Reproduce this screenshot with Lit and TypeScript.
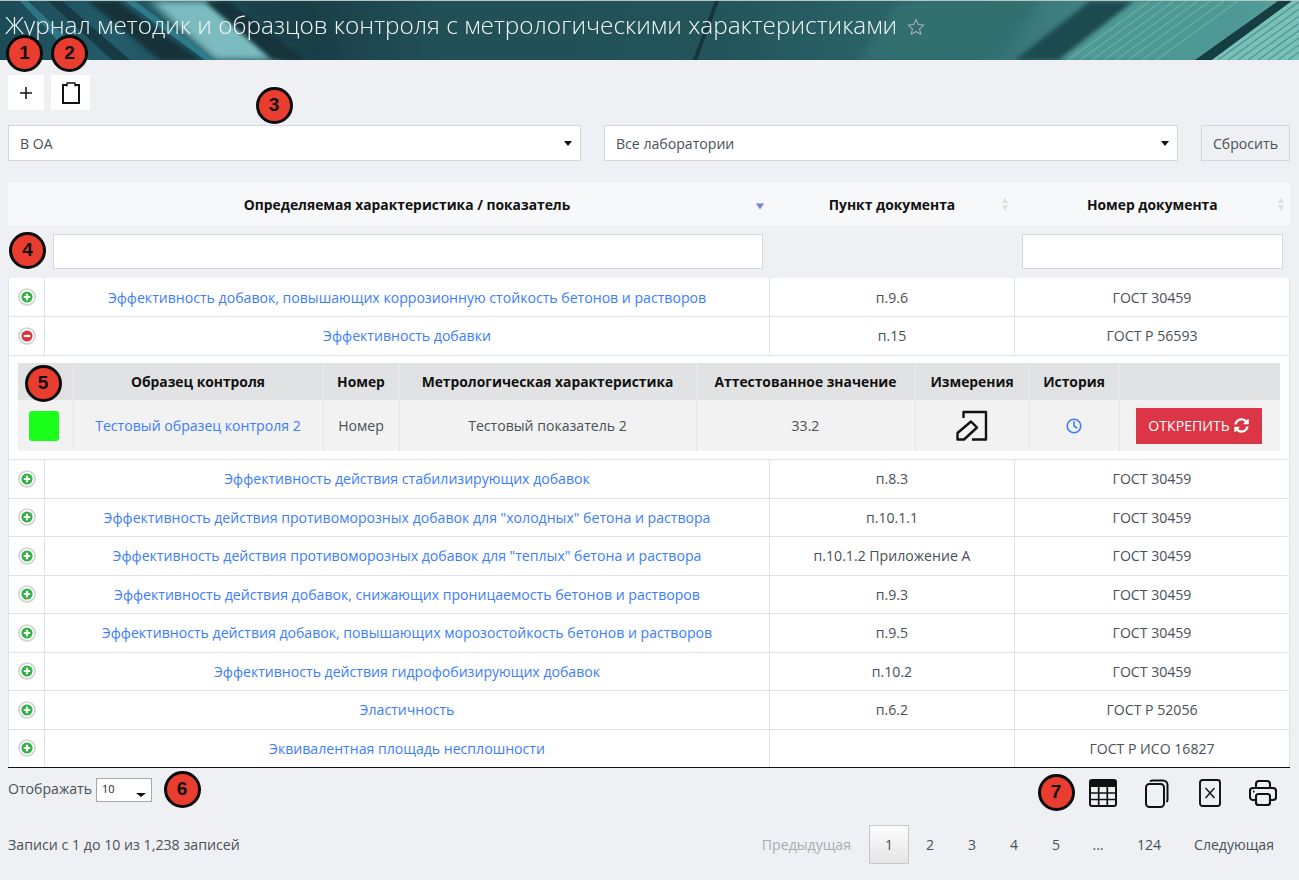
import { LitElement, css, html, svg } from "lit";
import { customElement, state } from "lit/decorators.js";

type Row = { name: string; clause: string; doc: string; open?: boolean };

const rows: Row[] = [
  { name: "Эффективность добавок, повышающих коррозионную стойкость бетонов и растворов", clause: "п.9.6", doc: "ГОСТ 30459" },
  { name: "Эффективность добавки", clause: "п.15", doc: "ГОСТ Р 56593", open: true },
  { name: "Эффективность действия стабилизирующих добавок", clause: "п.8.3", doc: "ГОСТ 30459" },
  { name: 'Эффективность действия противоморозных добавок для "холодных" бетона и раствора', clause: "п.10.1.1", doc: "ГОСТ 30459" },
  { name: 'Эффективность действия противоморозных добавок для "теплых" бетона и раствора', clause: "п.10.1.2 Приложение А", doc: "ГОСТ 30459" },
  { name: "Эффективность действия добавок, снижающих проницаемость бетонов и растворов", clause: "п.9.3", doc: "ГОСТ 30459" },
  { name: "Эффективность действия добавок, повышающих морозостойкость бетонов и растворов", clause: "п.9.5", doc: "ГОСТ 30459" },
  { name: "Эффективность действия гидрофобизирующих добавок", clause: "п.10.2", doc: "ГОСТ 30459" },
  { name: "Эластичность", clause: "п.6.2", doc: "ГОСТ Р 52056" },
  { name: "Эквивалентная площадь несплошности", clause: "", doc: "ГОСТ Р ИСО 16827" },
];

// numbered annotation marks lying over the page
const marks = [
  { n: 1, x: 24.5, y: 53 },
  { n: 2, x: 69.5, y: 53 },
  { n: 3, x: 274, y: 105 },
  { n: 4, x: 27.5, y: 250.5 },
  { n: 5, x: 43, y: 383 },
  { n: 6, x: 182, y: 789 },
  { n: 7, x: 1056, y: 792.5 },
];

// thin light stripes at the right end of the banner photo
const stripes = [1150, 1162, 1174, 1186, 1198, 1210, 1224, 1238, 1300, 1310, 1320, 1330, 1340, 1350, 1360, 1370];

const bannerArt = html`
  <svg class="art" viewBox="0 0 1299 60" preserveAspectRatio="none">
    <defs>
      <linearGradient id="base" x1="0" x2="1" y1="0" y2="0">
        <stop offset="0" stop-color="#1c4a57"></stop>
        <stop offset="0.09" stop-color="#235c6a"></stop>
        <stop offset="0.24" stop-color="#1a3f47"></stop>
        <stop offset="0.33" stop-color="#214f56"></stop>
        <stop offset="0.55" stop-color="#22545a"></stop>
        <stop offset="0.74" stop-color="#2f6b6e"></stop>
        <stop offset="0.79" stop-color="#3a7879"></stop>
        <stop offset="1" stop-color="#5aa5a0"></stop>
      </linearGradient>
      <filter id="b6"><feGaussianBlur stdDeviation="4"></feGaussianBlur></filter>
      <filter id="b2"><feGaussianBlur stdDeviation="2"></feGaussianBlur></filter>
      <filter id="b1"><feGaussianBlur stdDeviation="0.7"></feGaussianBlur></filter>
    </defs>
    <rect width="1299" height="60" fill="url(#base)"></rect>
    <g filter="url(#b6)">
      <polygon points="150,0 208,0 285,60 215,60" fill="#7cbcc0"></polygon>
      <polygon points="860,60 1000,60 1040,0 900,0" fill="#316f70"></polygon>
    </g>
    <g filter="url(#b2)">
      <polygon points="88,0 118,0 200,60 160,60" fill="#123038"></polygon>
      <polygon points="205,0 228,0 305,60 272,60" fill="#13323a"></polygon>
      <polygon points="235,0 300,0 340,60 320,60" fill="#1a3f47" opacity="0.8"></polygon>
      <polygon points="1090,0 1135,0 1060,60 1015,60" fill="#1f4c50"></polygon>
      <polygon points="1135,0 1270,0 1200,60 1060,60" fill="#4f9995"></polygon>
    </g>
    <g filter="url(#b1)">
      <polygon points="715,0 719,0 697,60 693,60" fill="#14353a"></polygon>
      <polygon points="1278,0 1292,0 1212,60 1195,60" fill="#143c42"></polygon>
      <polygon points="1292,0 1299,0 1299,60 1212,60" fill="#79c1b8"></polygon>
      <polygon points="20,0 28,0 90,60 76,60" fill="#2f7585"></polygon>
      <polygon points="48,0 62,0 130,60 112,60" fill="#153a44"></polygon>
      <polygon points="125,0 135,0 215,60 205,60" fill="#2f7a88"></polygon>
    </g>
    ${stripes.map(
      (x) => svg`<line x1="${x}" y1="0" x2="${x - 82}" y2="60" stroke="${x > 1290 ? "#2f6b6b" : "#7cc4ba"}" stroke-width="1.2" opacity="0.55"></line>`
    )}
  </svg>
`;

const toggleIcon = (open: boolean) => html`
  <svg class="toggle" viewBox="0 0 18 18" width="18" height="18">
    <circle cx="9" cy="9" r="8" fill="#fff" stroke="#d2d2d2" stroke-width="1.7"></circle>
    <circle cx="9" cy="9" r="5.6" fill="${open ? "#d9363e" : "#2fb344"}"></circle>
    ${open
      ? svg`<rect x="5.8" y="7.9" width="6.4" height="2.2" fill="#fff"></rect>`
      : svg`<path d="M7.9 5.8h2.2v2.1h2.1v2.2h-2.1v2.1H7.9v-2.1H5.8V7.9h2.1z" fill="#fff"></path>`}
  </svg>
`;

const sortIcon = (active: boolean) => html`
  <svg class="sort" viewBox="0 0 10 14" width="10" height="14">
    ${active
      ? svg`<path d="M1 6.5h8l-4 6z" fill="#7b7fd6"></path>`
      : svg`<path d="M5 0.5l3 5.5H2zM5 14l3-5.5H2z" fill="#dcdfe4"></path>`}
  </svg>
`;

@customElement("app-root")
export class AppRoot extends LitElement {
  @state() pages = ["2", "3", "4", "5", "...", "124"];

  static styles = css`
    :host {
      display: block;
      position: relative;
      height: 880px;
      overflow: hidden;
      background: #eef0f4;
      color: #495057;
      font-family: "Open Sans", "Noto Sans", sans-serif;
      font-size: 14.1px;
    }
    .banner {
      position: relative;
      height: 60px;
      box-sizing: border-box;
      padding: 7px 0 0 5px;
      display: flex;
      align-items: flex-start;
      gap: 10px;
      border-top: 1px solid #b9c4c4;
      background: #22545a;
    }
    .art {
      position: absolute;
      left: 0;
      top: 0;
      width: 100%;
      height: 100%;
    }
    .title {
      position: relative;
      font-size: 24.35px;
      font-weight: 300;
      line-height: 34px;
      color: #f2f6f6;
    }
    .star {
      position: relative;
      margin-top: 10px;
    }
    .tools {
      display: flex;
      gap: 7px;
      padding: 15px 0 0 8px;
    }
    .tool {
      height: 35px;
      display: flex;
      align-items: center;
      justify-content: center;
      background: #fff;
    }
    .tool.add {
      width: 36px;
    }
    .tool.clip {
      width: 39px;
    }
    .filters {
      display: flex;
      margin: 15px 9px 0 8px;
    }
    .select {
      box-sizing: border-box;
      height: 36px;
      display: flex;
      align-items: center;
      justify-content: space-between;
      padding: 0 11px;
      background: #fff;
      border: 1px solid #d3d6de;
    }
    .select.first {
      width: 573px;
      margin-right: 23px;
    }
    .select.second {
      width: 574px;
      margin-right: 23px;
    }
    .caret {
      width: 0;
      height: 0;
      border-left: 4px solid transparent;
      border-right: 4px solid transparent;
      border-top: 5px solid #111;
      margin-right: -3px;
      margin-top: 1px;
    }
    .reset {
      box-sizing: border-box;
      width: 89px;
      height: 36px;
      display: flex;
      align-items: center;
      justify-content: center;
      background: #eef0f4;
      border: 1px solid #d3d6de;
    }
    .journal {
      width: 1282px;
      margin: 22px 0 0 8px;
      border-collapse: collapse;
      table-layout: fixed;
    }
    .journal th {
      position: relative;
      height: 42px;
      padding: 0;
      background: #f7f8fa;
      color: #111;
      font-weight: 700;
      font-size: 13.85px;
      text-align: center;
      border-left: 1px solid #f7f8fa;
    }
    .sort {
      position: absolute;
      right: 4px;
      top: 14px;
    }
    .search td {
      height: 53px;
      padding: 0 7px;
      box-sizing: border-box;
    }
    .search .wide {
      padding-left: 8px;
    }
    .search input {
      display: block;
      box-sizing: border-box;
      width: 100%;
      height: 35px;
      background: #fff;
      border: 1px solid #d3d6de;
      border-radius: 0;
      outline: none;
    }
    .item td {
      height: 38.5px;
      box-sizing: border-box;
      padding: 0 4px;
      background: #fff;
      text-align: center;
      border: 1px solid #dfe2e6;
      border-top: 0;
    }
    .item td:first-child {
      padding: 0;
    }
    .toggle {
      display: block;
      margin: 0 auto;
      position: relative;
      left: 0.5px;
    }
    a {
      color: #3b7dfb;
      text-decoration: none;
    }
    .detail > td {
      padding: 7px 10px 8.5px 9px;
      background: #fff;
      border: 1px solid #dfe2e6;
      border-top: 0;
    }
    .journal tr.last td {
      border-bottom: 1px solid #111;
    }
    .inner {
      width: 1262px;
      border-collapse: collapse;
      table-layout: fixed;
    }
    .inner th {
      height: 37px;
      padding: 0;
      background: #e1e2e4;
      color: #111;
      text-align: center;
      border-left: 0;
      border-right: 1px solid #e8e9ea;
    }
    .inner td {
      height: 50px;
      padding: 1px 0 0;
      background: #f2f2f2;
      text-align: center;
      border-right: 1px solid #e4e5e6;
    }
    .inner th:last-child,
    .inner td:last-child {
      border-right: 0;
    }
    .swatch {
      display: block;
      width: 30px;
      height: 30px;
      margin-left: 11px;
      border-radius: 3px;
      background: #1aff1a;
    }
    .inner svg {
      display: block;
      margin: 0 auto;
    }
    .unpin {
      box-sizing: border-box;
      width: 126px;
      height: 36px;
      margin-left: 16px;
      display: flex;
      align-items: center;
      justify-content: center;
      gap: 4px;
      background: #dc3545;
      color: #fff;
    }
    .inner .unpin svg {
      margin: 0;
    }
    .controls {
      display: flex;
      justify-content: space-between;
      height: 46px;
      padding: 10px 22px 0 8px;
    }
    .length {
      display: flex;
      align-items: flex-start;
      gap: 4px;
    }
    .length span {
      line-height: 22px;
    }
    .length .box {
      box-sizing: border-box;
      position: relative;
      width: 56px;
      height: 24px;
      border: 1px solid #a9a9a9;
      background: #fff;
      color: #222;
      font-size: 11px;
      line-height: 20px;
      padding-left: 5px;
    }
    .length .box i {
      position: absolute;
      right: 5px;
      bottom: 4px;
      border-left: 5px solid transparent;
      border-right: 5px solid transparent;
      border-top: 4px solid #111;
    }
    .exports {
      display: flex;
      align-items: center;
      height: 30px;
    }
    .foot {
      display: flex;
      justify-content: space-between;
      align-items: center;
      padding: 0 25px 0 8px;
      height: 40px;
    }
    .info {
      font-size: 14.2px;
    }
    .pager {
      display: flex;
      align-items: center;
    }
    .pager span {
      text-align: center;
      min-width: 42px;
    }
    .pager .off {
      color: #a9adb3;
      min-width: 0;
      margin-right: 18px;
    }
    .pager .cur {
      box-sizing: border-box;
      min-width: 40px;
      height: 39px;
      line-height: 37px;
      border: 1px solid #c8c8c8;
      background: linear-gradient(#fdfdfd, #e4e4e4);
    }
    .pager .wide {
      min-width: 60px;
    }
    .pager .next {
      margin-left: 15px;
      min-width: 0;
    }
    .mark {
      position: absolute;
      box-sizing: border-box;
      width: 37px;
      height: 37px;
      margin: -18.5px 0 0 -18.5px;
      border: 3.5px solid #0b0b0b;
      border-radius: 50%;
      background: #e93d30;
      color: #111;
      font-family: "Liberation Sans", sans-serif;
      font-size: 19px;
      font-weight: 700;
      line-height: 30px;
      text-align: center;
    }
  `;

  renderRow(row: Row, last: boolean) {
    return html`
      <tr class="item ${last ? "last" : ""}">
        <td>${toggleIcon(!!row.open)}</td>
        <td><a href="#">${row.name}</a></td>
        <td>${row.clause}</td>
        <td>${row.doc}</td>
      </tr>
      ${row.open ? this.renderDetail() : ""}
    `;
  }

  renderDetail() {
    return html`
      <tr class="detail">
        <td colspan="4">
          <table class="inner">
            <colgroup>
              <col style="width:55px" />
              <col style="width:250px" />
              <col style="width:76px" />
              <col style="width:297px" />
              <col style="width:219px" />
              <col style="width:114px" />
              <col style="width:90px" />
              <col />
            </colgroup>
            <tr>
              <th></th>
              <th>Образец контроля</th>
              <th>Номер</th>
              <th>Метрологическая характеристика</th>
              <th>Аттестованное значение</th>
              <th>Измерения</th>
              <th>История</th>
              <th></th>
            </tr>
            <tr>
              <td><span class="swatch"></span></td>
              <td><a href="#">Тестовый образец контроля 2</a></td>
              <td>Номер</td>
              <td>Тестовый показатель 2</td>
              <td>33.2</td>
              <td>
                <svg viewBox="0 0 32 31" width="32" height="31" fill="none" stroke="#111" stroke-width="2.4" stroke-linejoin="round">
                  <path d="M7.5 8V2H30v27.5H16"></path>
                  <path d="M1.5 29.5V23L15 11.5l6 6L8 29.5z"></path>
                </svg>
              </td>
              <td>
                <svg viewBox="0 0 16 16" width="16" height="16" fill="none" stroke="#3b7dfb" stroke-width="1.6" stroke-linecap="round">
                  <circle cx="8" cy="8" r="6.8"></circle>
                  <path d="M8 3.8V8l2.8 1.8"></path>
                </svg>
              </td>
              <td>
                <div class="unpin">
                  ОТКРЕПИТЬ
                  <svg viewBox="0 0 512 512" width="15" height="15">
                    <path fill="#fff" d="M370.72 133.28C339.458 104.008 298.888 87.962 255.848 88c-77.458.068-144.328 53.178-162.791 126.85-1.344 5.363-6.122 9.15-11.651 9.15H24.103c-7.498 0-13.194-6.807-11.807-14.176C33.933 94.924 134.813 8 256 8c66.448 0 126.791 26.136 171.315 68.685L463.03 40.97C478.149 25.851 504 36.559 504 57.941V192c0 13.255-10.745 24-24 24H345.941c-21.382 0-32.09-25.851-16.971-40.971l41.75-41.749zM32 296h134.059c21.382 0 32.09 25.851 16.971 40.971l-41.75 41.75c31.262 29.273 71.835 45.319 114.876 45.28 77.418-.07 144.315-53.144 162.787-126.849 1.344-5.363 6.122-9.15 11.651-9.15h57.304c7.498 0 13.194 6.807 11.807 14.176C478.067 417.076 377.187 504 256 504c-66.448 0-126.791-26.136-171.315-68.685L48.97 471.03C33.851 486.149 8 475.441 8 454.059V320c0-13.255 10.745-24 24-24z"></path>
                  </svg>
                </div>
              </td>
            </tr>
          </table>
        </td>
      </tr>
    `;
  }

  renderExports() {
    return html`
      <div class="exports">
        <svg viewBox="0 0 28 28" width="28" height="28" style="margin-right:28px">
          <rect x="1" y="1" width="26" height="26" rx="2" fill="none" stroke="#111" stroke-width="2"></rect>
          <path d="M1 3a2 2 0 0 1 2-2h22a2 2 0 0 1 2 2v5H1z" fill="#111"></path>
          <path d="M1 14h26M1 20.5h26M9.7 8v19M18.3 8v19" stroke="#111" stroke-width="1.7"></path>
        </svg>
        <svg viewBox="0 0 24 29" width="24" height="29" fill="none" stroke="#111" stroke-width="2" style="margin-right:30px">
          <rect x="1" y="5" width="18" height="23" rx="3.5"></rect>
          <path d="M5 2.6A2.6 2.6 0 0 1 7 1.5h11A4.5 4.5 0 0 1 22.5 6v15a2.6 2.6 0 0 1-1.1 2"></path>
        </svg>
        <svg viewBox="0 0 22 28" width="22" height="28" fill="none" stroke="#111" stroke-width="1.9" style="margin-right:28px">
          <rect x="1" y="1" width="20" height="26" rx="2.5"></rect>
          <path d="M6.5 9l9 10M15.5 9l-9 10" stroke-width="1.4"></path>
        </svg>
        <svg viewBox="0 0 28 26" width="28" height="26" fill="none" stroke="#111" stroke-width="2.1" stroke-linejoin="round">
          <path d="M7 8V4a3 3 0 0 1 3-3h8a3 3 0 0 1 3 3v4"></path>
          <path d="M7 20H4a3 3 0 0 1-3-3v-6a3 3 0 0 1 3-3h20a3 3 0 0 1 3 3v6a3 3 0 0 1-3 3h-3"></path>
          <rect x="7" y="14" width="14" height="11" rx="2.5"></rect>
          <path d="M4 11.5h1.5"></path>
        </svg>
      </div>
    `;
  }

  render() {
    return html`
      <header class="banner">
        ${bannerArt}
        <div class="title">Журнал методик и образцов контроля с метрологическими характеристиками</div>
        <svg class="star" viewBox="0 0 16 16" width="18" height="18" fill="none" stroke="#a9b4b6" stroke-width="0.9" stroke-linejoin="round">
          <path d="M8 1.2l2 4.6 5 .5-3.8 3.3 1.1 4.9L8 12l-4.3 2.5 1.1-4.9L1 6.3l5-.5z"></path>
        </svg>
      </header>

      <div class="tools">
        <div class="tool add">
          <svg viewBox="0 0 12 12" width="12" height="12">
            <path d="M6 0v12M0 6h12" stroke="#111" stroke-width="1.5"></path>
          </svg>
        </div>
        <div class="tool clip">
          <svg viewBox="0 0 18 22" width="18" height="22" fill="none" stroke="#111" stroke-width="2">
            <path d="M5 3H1v18h16V3h-4"></path>
            <path d="M5 4.5V1h8v3.5" stroke-width="1.3"></path>
          </svg>
        </div>
      </div>

      <div class="filters">
        <div class="select first">В ОА<i class="caret"></i></div>
        <div class="select second">Все лаборатории<i class="caret"></i></div>
        <div class="reset">Сбросить</div>
      </div>

      <table class="journal">
        <colgroup>
          <col style="width:36px" />
          <col style="width:725px" />
          <col style="width:245px" />
          <col />
        </colgroup>
        <tr>
          <th></th>
          <th>Определяемая характеристика / показатель ${sortIcon(true)}</th>
          <th>Пункт документа ${sortIcon(false)}</th>
          <th>Номер документа ${sortIcon(false)}</th>
        </tr>
        <tr class="search">
          <td></td>
          <td class="wide"><input type="text" /></td>
          <td></td>
          <td><input type="text" /></td>
        </tr>
        ${rows.map((row, i) => this.renderRow(row, i === rows.length - 1))}
      </table>

      <div class="controls">
        <div class="length">
          <span>Отображать</span>
          <div class="box">10<i></i></div>
        </div>
        ${this.renderExports()}
      </div>

      <div class="foot">
        <div class="info">Записи с 1 до 10 из 1,238 записей</div>
        <div class="pager">
          <span class="off">Предыдущая</span>
          <span class="cur">1</span>
          ${this.pages.map(
            (p) => html`<span class="page ${p === "124" ? "wide" : ""}">${p}</span>`
          )}
          <span class="next">Следующая</span>
        </div>
      </div>

      ${marks.map(
        (m) => html`<div class="mark" style="left:${m.x}px;top:${m.y}px">${m.n}</div>`
      )}
    `;
  }
}
